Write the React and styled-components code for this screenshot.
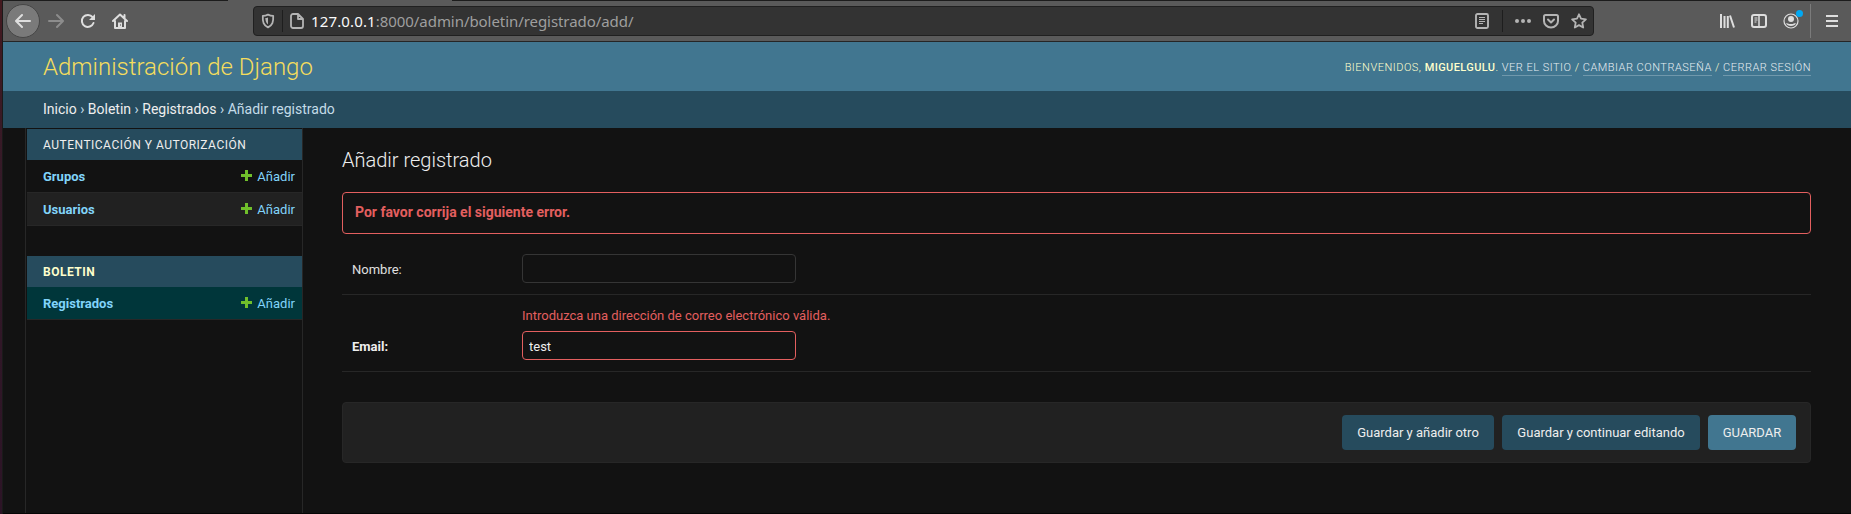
import React from "react";
import styled, { createGlobalStyle } from "styled-components";

const GlobalStyle = createGlobalStyle`
  * { box-sizing: border-box; }
  html, body { margin: 0; background: #121212; }
  body { font: 13px/16px Roboto, "Liberation Sans", sans-serif; color: #eeeeee; overflow: hidden; }
  a { text-decoration: none; color: #81d4fa; }
`;

const Desktop = styled.div`
  display: flex;
  width: 1851px;
  height: 514px;
`;
const DesktopEdge = styled.div`
  flex: 0 0 3px;
  background: linear-gradient(#43191f, #341a28 35%, #2c1426);
  border-right: 1px solid #1a1a1a;
`;
const Browser = styled.div`
  flex: 1;
  display: flex;
  flex-direction: column;
  border-bottom: 1px solid #050505;
`;

/* Browser chrome */
const TabEdge = styled.div`
  flex: 0 0 1px;
  background: linear-gradient(to right, #1c1c1c 225px, #5a5a5a 225px, #5a5a5a 449px, #1c1c1c 449px);
`;
const Toolbar = styled.div`
  flex: 0 0 41px;
  display: flex;
  align-items: center;
  background: #5a5a5a;
  border-bottom: 1px solid #252525;
  padding-left: 3px;
  color: #dedede;
  svg { display: block; }
`;
const BackButton = styled.div`
  width: 34px;
  height: 34px;
  border-radius: 50%;
  border: 1px solid #464646;
  background: #7a7a7a;
  display: grid;
  place-items: center;
`;
const NavIcon = styled.div`
  width: 16px;
  margin-left: ${(p) => p.$gap}px;
  color: ${(p) => (p.$dim ? "#8c8c8c" : "#dedede")};
`;
const UrlBar = styled.div`
  width: 1341px;
  height: 30px;
  margin-left: 125px;
  border: 1px solid #202020;
  border-radius: 4px;
  background: #333333;
  display: flex;
  align-items: center;
  color: #b4b4b4;
  padding-left: 7px;
`;
const UrlDivider = styled.div`
  width: 1px;
  height: 22px;
  background: #1e1e1e;
  margin: 0 ${(p) => p.$right}px 0 ${(p) => p.$left}px;
`;
const Url = styled.div`
  margin-left: 7px;
  font: 15px/20px "Noto Sans", "Open Sans", sans-serif;
  letter-spacing: -0.06px;
  color: #9f9f9f;
  flex: 1;
  b { font-weight: 400; color: #fafafa; letter-spacing: 0.14px; }
`;
const UrlIcon = styled.div`
  margin-right: ${(p) => p.$right}px;
`;
const ToolIcons = styled.div`
  display: flex;
  align-items: center;
  margin-left: 125px;
`;
const ToolIcon = styled.div`
  position: relative;
  width: 16px;
  margin-right: ${(p) => p.$right}px;
`;
const Notice = styled.span`
  position: absolute;
  top: -3px;
  right: -4px;
  width: 7px;
  height: 7px;
  border-radius: 50%;
  background: #00a8f3;
`;
const ToolDivider = styled.div`
  width: 1px;
  height: 34px;
  background: #7b7b7b;
  margin-right: 13px;
`;

/* Site header */
const Header = styled.header`
  flex: 0 0 49px;
  display: flex;
  align-items: center;
  justify-content: space-between;
  padding: 0 40px;
  background: #417690;
`;
const SiteName = styled.h1`
  margin: 0;
  font-size: 24px;
  line-height: 30px;
  font-weight: 300;
  color: #f5dd5d;
`;
const UserTools = styled.div`
  padding-top: 2px;
  font-size: 11px;
  line-height: 15px;
  font-weight: 300;
  letter-spacing: 0.5px;
  text-transform: uppercase;
  color: #ffffcc;
  b { font-weight: 500; letter-spacing: 0.4px; }
  a { color: #e6edf0; display: inline-block; border-bottom: 1px solid rgba(255, 255, 255, 0.25); }
`;
const Breadcrumbs = styled.nav`
  flex: 0 0 37px;
  padding: 10px 40px;
  font-size: 14px;
  line-height: 17px;
  background: #264b5d;
  color: #c4dce8;
  a { color: #eeeeee; }
`;

/* Body */
const Main = styled.div`
  flex: 1;
  display: flex;
  padding-left: 22px;
  background: #121212;
`;
const Sidebar = styled.aside`
  width: 278px;
  padding: 1px 0 0 1px;
  border: solid #272727;
  border-width: 0 1px;
`;
const Module = styled.section`
  margin-bottom: 30px;
`;
const Caption = styled.h2`
  margin: 0;
  height: 31px;
  padding: 9px 16px 7px;
  font-size: 12px;
  line-height: 15px;
  letter-spacing: 0.5px;
  text-transform: uppercase;
  font-weight: ${(p) => (p.$current ? 700 : 400)};
  color: ${(p) => (p.$current ? "#ffffcc" : "#eeeeee")};
  background: #264b5d;
`;
const ModelRow = styled.div`
  height: 33px;
  display: flex;
  justify-content: space-between;
  padding: 9px 7px 7px 16px;
  border-bottom: 1px solid #272727;
  background: ${(p) => (p.$current ? "#00363a" : p.$alt ? "#212121" : "#121212")};
  b { font-weight: 700; }
`;
const AddLink = styled.a`
  display: flex;
  gap: 5px;
  svg { margin-top: 1px; }
`;
const Content = styled.main`
  flex: 1;
  padding: 20px 40px 0 39px;
`;
const PageTitle = styled.h2`
  margin: 0 0 20px;
  font-size: 20px;
  line-height: 24px;
  font-weight: 300;
`;
const ErrorNote = styled.p`
  margin: 0 0 10px;
  height: 42px;
  padding: 10px 12px;
  border: 1px solid #e35f5f;
  border-radius: 4px;
  font-size: 14px;
  line-height: 18px;
  font-weight: 700;
  color: #e35f5f;
`;
const FormRow = styled.div`
  padding: 10px;
  height: ${(p) => p.$height}px;
  border-bottom: 1px solid #272727;
`;
const FieldError = styled.div`
  margin: 0 0 8px 170px;
  padding-top: 3px;
  line-height: 15px;
  color: #e35f5f;
`;
const Field = styled.div`
  display: flex;
`;
const Label = styled.label`
  width: 170px;
  padding-top: 8px;
  line-height: 16px;
  font-weight: ${(p) => (p.$required ? 700 : 400)};
  color: ${(p) => (p.$required ? "#eeeeee" : "#e0e0e0")};
`;
const TextInput = styled.input`
  width: 274px;
  height: 29px;
  padding: 6px 6px 4px;
  border: 1px solid ${(p) => (p.$invalid ? "#e35f5f" : "#353535")};
  border-radius: 4px;
  outline: none;
  background: #121212;
  color: #eeeeee;
  font: 13px Roboto, sans-serif;
`;
const SubmitRow = styled.div`
  height: 61px;
  margin-top: 30px;
  padding: 12px 14px;
  display: flex;
  justify-content: flex-end;
  gap: 8px;
  background: #212121;
  border: 1px solid #272727;
  border-radius: 4px;
`;
const SubmitButton = styled.button`
  width: ${(p) => p.$width}px;
  height: 35px;
  padding: 0;
  border: 0;
  border-radius: 4px;
  background: ${(p) => (p.$primary ? "#417690" : "#264b5d")};
  color: #eeeeee;
  font: 13px Roboto, sans-serif;
`;

const Icon = ({ children, ...rest }) => (
  <svg width="16" height="16" viewBox="0 0 16 16" fill="none" stroke="currentColor" strokeWidth="2" strokeLinecap="round" strokeLinejoin="round" {...rest}>
    {children}
  </svg>
);
const BackArrow = () => <Icon><path d="M15 8H1.5M7 2L1 8l6 6" /></Icon>;
const ForwardArrow = () => <Icon><path d="M1 8h13.5M9 2l6 6-6 6" /></Icon>;
const Reload = () => (
  <Icon>
    <path d="M13.5 10A6 6 0 1 1 12.6 4.2" />
    <path d="M15 1v6H9z" fill="currentColor" stroke="none" />
  </Icon>
);
const Home = () => (
  <Icon>
    <path d="M1 8l7-6.5L15 8M3 8v7h10V8M12.5 2v3" />
    <path d="M6 15V9.5h4V15" fill="currentColor" stroke="none" />
    <path d="M8.5 11.8v.4" stroke="#5a5a5a" strokeWidth="1" />
  </Icon>
);
const Shield = () => (
  <Icon width="14" height="16" viewBox="0 0 14 16">
    <path d="M7 1.6c2 1 3.8 1.3 5.2 1.3C12.5 9 11.5 12 7 14.4 2.5 12 1.5 9 1.8 2.9 3.2 2.9 5 2.6 7 1.6z" strokeWidth="1.8" />
    <path d="M7 4.5c-1 .4-1.8.5-2.7.6.1 3 .8 5 2.7 6.4z" fill="currentColor" stroke="none" />
  </Icon>
);
const Page = () => (
  <Icon width="14" height="16" viewBox="0 0 14 16">
    <path d="M3 1h5l5 5v7a2 2 0 0 1-2 2H3a2 2 0 0 1-2-2V3a2 2 0 0 1 2-2zM8 1v5h5" strokeWidth="1.8" />
  </Icon>
);
const Reader = () => (
  <Icon width="14" height="16" viewBox="0 0 14 16">
    <rect x="1" y="1" width="12" height="14" rx="1.5" strokeWidth="1.9" />
    <path d="M4 4.5h6M4 6.5h6M4 8.5h6M4 10.5h4" strokeWidth="1" strokeLinecap="butt" />
  </Icon>
);
const Dots = () => (
  <Icon fill="currentColor" stroke="none"><circle cx="2" cy="8" r="2" /><circle cx="8" cy="8" r="2" /><circle cx="14" cy="8" r="2" /></Icon>
);
const Pocket = () => (
  <Icon><path d="M2.5 2h11A1.5 1.5 0 0 1 15 3.5V8A7 6.5 0 0 1 1 8V3.5A1.5 1.5 0 0 1 2.5 2z" /><path d="M5 6.5l3 3 3-3" /></Icon>
);
const Star = () => (
  <Icon><path d="M8 1.3l2 4.4 4.9.6-3.6 3.3.9 4.9L8 12.1l-4.2 2.4.9-4.9L1.1 6.3 6 5.7z" strokeWidth="1.8" /></Icon>
);
const Library = () => (
  <Icon strokeLinecap="butt"><path d="M2 1v14M5.5 3v12M8.8 3v12M11 2.5l4 12" /></Icon>
);
const SidebarIcon = () => (
  <Icon><rect x="1" y="2" width="14" height="12" rx="2" /><path d="M8 2v12" strokeWidth="1.5" /><path d="M3.5 5h3M3.5 7h3M3.5 9h2" strokeWidth="1" strokeLinecap="butt" /></Icon>
);
const Account = () => (
  <Icon>
    <circle cx="8" cy="8" r="7" strokeWidth="1.2" />
    <circle cx="8" cy="6" r="3" fill="currentColor" stroke="none" />
    <path d="M3 10.2c3 .2 1.5.8 5 .8s2-.6 5-.8C12 12 10.5 13 8 13s-4-1-5-2.800z" fill="currentColor" stroke="none" />
  </Icon>
);
const Menu = () => <Icon strokeLinecap="butt"><path d="M2 3h12M2 8h12M2 13h12" /></Icon>;
const Plus = () => (
  <svg width="11" height="11" viewBox="0 0 11 11"><path d="M4 0h3v4h4v3H7v4H4V7H0V4h4z" fill="#70bf2b" /></svg>
);

const Model = ({ name, ...rest }) => (
  <ModelRow {...rest}>
    <a href="#"><b>{name}</b></a>
    <AddLink href="#"><Plus />Añadir</AddLink>
  </ModelRow>
);

export default function App() {
  return (
    <Desktop>
      <GlobalStyle />
      <DesktopEdge />
      <Browser>
        <TabEdge />
        <Toolbar>
          <BackButton><BackArrow /></BackButton>
          <NavIcon $gap={8} $dim><ForwardArrow /></NavIcon>
          <NavIcon $gap={16}><Reload /></NavIcon>
          <NavIcon $gap={16}><Home /></NavIcon>
          <UrlBar>
            <Shield />
            <UrlDivider $left={7} $right={7} />
            <Page />
            <Url><b>127.0.0.1</b>:8000/admin/boletin/registrado/add/</Url>
            <UrlIcon $right={0}><Reader /></UrlIcon>
            <UrlDivider $left={13} $right={12} />
            <UrlIcon $right={12}><Dots /></UrlIcon>
            <UrlIcon $right={12}><Pocket /></UrlIcon>
            <UrlIcon $right={6}><Star /></UrlIcon>
          </UrlBar>
          <ToolIcons>
            <ToolIcon $right={16}><Library /></ToolIcon>
            <ToolIcon $right={16}><SidebarIcon /></ToolIcon>
            <ToolIcon $right={11}><Account /><Notice /></ToolIcon>
            <ToolDivider />
            <ToolIcon $right={0}><Menu /></ToolIcon>
          </ToolIcons>
        </Toolbar>
        <Header>
          <SiteName>Administración de Django</SiteName>
          <UserTools>
            Bienvenidos, <b>miguelgulu</b>. <a href="#">Ver el sitio</a> / <a href="#">Cambiar contraseña</a> / <a href="#">Cerrar sesión</a>
          </UserTools>
        </Header>
        <Breadcrumbs>
          <a href="#">Inicio</a> › <a href="#">Boletin</a> › <a href="#">Registrados</a> › Añadir registrado
        </Breadcrumbs>
        <Main>
          <Sidebar>
            <Module>
              <Caption>Autenticación y autorización</Caption>
              <Model name="Grupos" />
              <Model name="Usuarios" $alt />
            </Module>
            <Module>
              <Caption $current>Boletin</Caption>
              <Model name="Registrados" $current />
            </Module>
          </Sidebar>
          <Content>
            <PageTitle>Añadir registrado</PageTitle>
            <ErrorNote>Por favor corrija el siguiente error.</ErrorNote>
            <FormRow $height={51}>
              <Field>
                <Label>Nombre:</Label>
                <TextInput defaultValue="" />
              </Field>
            </FormRow>
            <FormRow $height={77}>
              <FieldError>Introduzca una dirección de correo electrónico válida.</FieldError>
              <Field>
                <Label $required>Email:</Label>
                <TextInput $invalid defaultValue="test" />
              </Field>
            </FormRow>
            <SubmitRow>
              <SubmitButton $width={152}>Guardar y añadir otro</SubmitButton>
              <SubmitButton $width={198}>Guardar y continuar editando</SubmitButton>
              <SubmitButton $width={88} $primary>GUARDAR</SubmitButton>
            </SubmitRow>
          </Content>
        </Main>
      </Browser>
    </Desktop>
  );
}
